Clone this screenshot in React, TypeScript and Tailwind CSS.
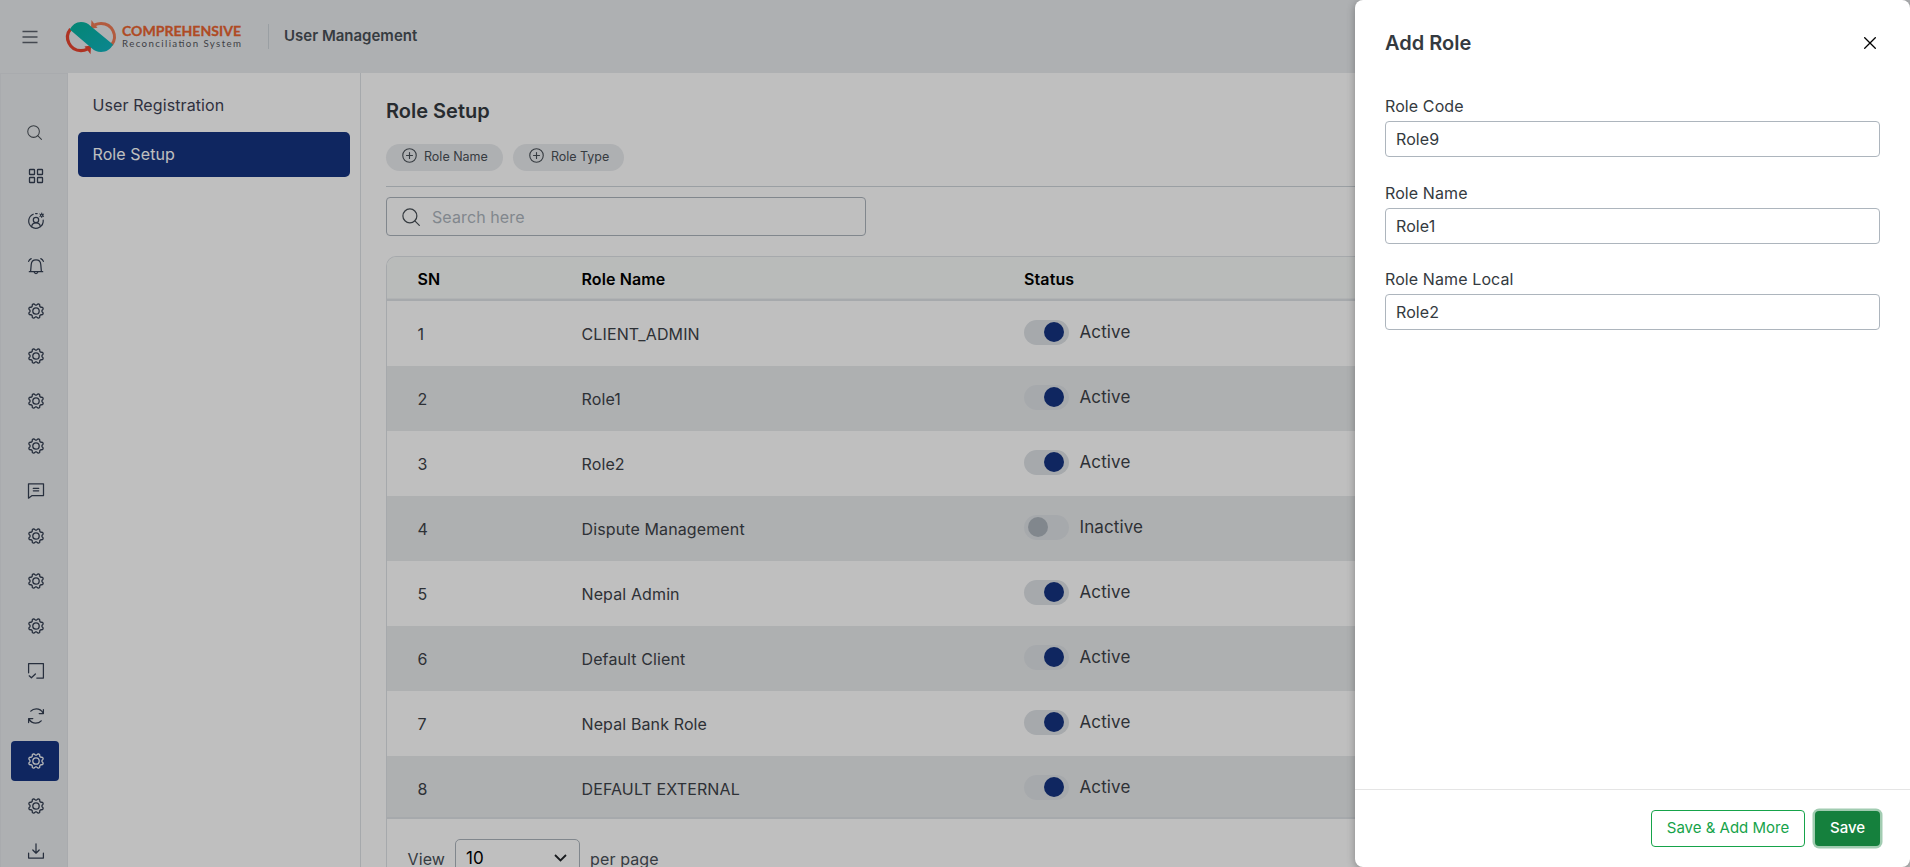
import type { ReactNode } from "react";

const GEAR = (() => {
  const pts: string[] = [];
  for (let i = 0; i < 96; i++) {
    const a = (i / 96) * Math.PI * 2;
    const w = Math.cos(8 * (a - Math.PI / 8));
    const r = 6.75 + 0.85 * Math.tanh(1.8 * w);
    pts.push(`${(8 + r * Math.cos(a)).toFixed(2)} ${(8 + r * Math.sin(a)).toFixed(2)}`);
  }
  return `M${pts.join("L")}Z`;
})();

function Icon({ children, size = 16, w = 1.25 }: { children: ReactNode; size?: number; w?: number }) {
  return (
    <svg width={size} height={size} viewBox="0 0 16 16" fill="none" stroke="currentColor" strokeWidth={w} strokeLinecap="round" strokeLinejoin="round" className="shrink-0 overflow-visible">
      {children}
    </svg>
  );
}

const Gear = () => (
  <Icon w={1.3}>
    <path d={GEAR} />
    <circle cx="8" cy="8" r="3.2" />
  </Icon>
);

const Search = ({ size = 16 }: { size?: number }) => (
  <Icon size={size} w={1.1}>
    <circle cx="7" cy="7" r="6.2" />
    <path d="M11.4 11.4 15.4 15.4" />
  </Icon>
);

const Grid = () => (
  <Icon w={1.3}>
    <rect x="1.5" y="1.5" width="5" height="5" rx=".6" />
    <rect x="9.5" y="1.5" width="5" height="5" rx=".6" />
    <rect x="1.5" y="9.5" width="5" height="5" rx=".6" />
    <rect x="9.5" y="9.5" width="5" height="5" rx=".6" />
  </Icon>
);

const UserCog = () => (
  <Icon w={1.2}>
    <path d="M5.200 1.200A7.400 7.400 0 0 0 3.400 13.700a7.400 7.400 0 0 0 11.800-6.700M7.600.6h1.600" />
    <circle cx="8" cy="7" r="2.700" />
    <path d="M3.600 13.600c.4-2.200 1.900-3.700 4.400-3.700s4 1.500 4.400 3.700" />
    <circle cx="13.700" cy="2.300" r="1.200" />
    <path strokeWidth=".9" d="M13.700.9V0M13.700 3.700v.9M12.500 1.600l-.8-.5M14.900 3l.8.5M12.500 3l-.8.5M14.900 1.600l.8-.5" />
  </Icon>
);

const Bell = () => (
  <Icon>
    <path d="M1.300 13.700h13.400M2.600 13.600 3.200 6.700C3.400 3.800 5.300 2 8 2s4.600 1.800 4.800 4.700l.6 6.900" />
    <path d="M6.200 14c.2 1 .9 1.500 1.800 1.500s1.600-.5 1.800-1.500M.6 3.400C1 2.200 1.900 1.100 3.200.6M15.400 3.400C15 2.200 14.100 1.100 12.800.6" />
  </Icon>
);

const Message = () => (
  <Icon>
    <path d="M.5 15.200V.8h15v11.700H4.100L.5 15.200ZM5.300 5.400h5.400M5.300 7.800h5.400" />
  </Icon>
);

const CheckNote = () => (
  <Icon>
    <path d="M.6 9.800V.6h14.800v14.400H8.800M1.200 12.800l2.200 2 4-3.800" />
  </Icon>
);

const Refresh = () => (
  <Icon>
    <path d="M2.800 3.200C4.200 1.600 6 .9 8.300.9c2.900 0 5.300 1.500 6.700 4M15.400 1.500v4H11.200M13.200 12.800c-1.400 1.600-3.200 2.300-5.500 2.300-2.900 0-5.300-1.500-6.700-4M.6 14.500v-4h4.200" />
  </Icon>
);

const Download = () => (
  <Icon>
    <path d="M.6 10v5h14.800v-5M8 .8v9.200M4.800 7 8 10.200 11.200 7" />
  </Icon>
);

const RAIL: ReactNode[] = [
  <Grid />, <UserCog />, <Bell />, <Gear />, <Gear />, <Gear />, <Gear />, <Message />,
  <Gear />, <Gear />, <Gear />, <CheckNote />, <Refresh />, <Gear />, <Gear />, <Download />,
];
const ACTIVE_RAIL = 13;

const ROLES = [
  { name: "CLIENT_ADMIN", active: true },
  { name: "Role1", active: true },
  { name: "Role2", active: true },
  { name: "Dispute Management", active: false },
  { name: "Nepal Admin", active: true },
  { name: "Default Client", active: true },
  { name: "Nepal Bank Role", active: true },
  { name: "DEFAULT EXTERNAL", active: true },
];

function Logo() {
  return (
    <div className="flex items-center">
      <svg width="50" height="34" viewBox="0 0 50 34" fill="none" className="overflow-visible">
        <defs>
          <linearGradient id="band" x1="0" y1="0" x2="1" y2="1">
            <stop offset="0" stopColor="#06b39b" />
            <stop offset="1" stopColor="#10b3c0" />
          </linearGradient>
        </defs>
        <path d="M4.500 9A13.300 13.300 0 0 0 15 30.600c2.600 0 4.600-.6 6.300-1.500" stroke="#e8452f" strokeWidth="3.200" />
        <path d="M18.500 26.500l6.600-1-.6 8.800-1.800-2.600z" fill="#e8452f" />
        <path d="M45.500 25A13.300 13.300 0 0 0 35 3.400c-2.600 0-4.600.6-6.300 1.500" stroke="#ee7a55" strokeWidth="3" />
        <path d="M31.500 7.700l-6.600 1 .6-8.700 1.800 2.500z" fill="#ee7a55" />
        <path d="M3.800 9.500C6.200 5 10 2 15 2c4 0 7 1.500 9.500 4L47 24.500C44.500 29.300 40.500 32 35 32c-4 0-6.500-1.300-9-3.400z" fill="url(#band)" />
      </svg>
      <svg width="121" height="34" viewBox="0 0 121 34" className="ml-[6px] overflow-visible">
        <text x="0" y="15.500" textLength="119" lengthAdjust="spacingAndGlyphs" fontFamily="Lato, sans-serif" fontWeight="700" fontSize="14" fill="#ea6430" stroke="#ea6430" strokeWidth=".3">COMPREHENSIVE</text>
        <text x="0" y="27.300" textLength="119" lengthAdjust="spacing" fontFamily="Lato, sans-serif" fontSize="9.700" fill="#54565c">Reconciliation System</text>
      </svg>
    </div>
  );
}

function Header() {
  return (
    <header className="flex h-[73px] shrink-0 items-center bg-[#e9ebee] pl-[22px]">
      <svg width="16" height="14" viewBox="0 0 16 14" stroke="#5b616b" strokeWidth="1.300">
        <path d="M.5 1.500h15M.5 7h15M.5 12.500h15" />
      </svg>
      <div className="ml-[28px]">
        <Logo />
      </div>
      <div className="ml-[25px] h-[25px] w-px bg-[#ced4da]" />
      <h1 className="ml-[15px] text-[15px] font-semibold text-[#495057]">User Management</h1>
    </header>
  );
}

function Rail() {
  return (
    <nav className="flex w-[68px] shrink-0 flex-col border-x border-t border-[#e2e5e9] bg-[#e9ebee] pt-[51px] text-[#343f52]">
      <div className="mb-[16px] ml-[26px] text-[#495057]">
        <Search size={15} />
      </div>
      {RAIL.map((icon, i) => (
        <div
          key={i}
          className={
            i === ACTIVE_RAIL
              ? "mb-[5px] ml-[10px] flex h-10 w-12 shrink-0 items-center justify-center rounded-[4px] bg-[#143380] pl-[2px] text-[#f1f3f5]"
              : "mb-[5px] ml-[10px] flex h-10 w-12 shrink-0 items-center justify-center pl-[2px]"
          }
        >
          {icon}
        </div>
      ))}
    </nav>
  );
}

function SubMenu() {
  return (
    <aside className="flex w-[293px] shrink-0 flex-col border-r border-[#dee2e6] px-[10px] pt-[10px] text-[16px] tracking-[0.1px]">
      <div className="flex h-[45px] items-center pb-[2px] pl-[14.500px] text-[#3f4254]">User Registration</div>
      <div className="mt-[4px] flex h-[45px] items-center rounded-[5px] bg-[#143380] pb-[1px] pl-[14.500px] text-white">Role Setup</div>
    </aside>
  );
}

function Pill({ label }: { label: string }) {
  return (
    <div className="flex h-[27px] items-center rounded-full bg-[#e9ebee] pr-[15px] pl-4 text-[12.500px] text-[#495057]">
      <span className="-mt-[4px] mr-[7px]">
        <Icon size={15} w={1.2}>
          <circle cx="8" cy="8" r="7.200" />
          <path d="M8 4.800v6.400M4.800 8h6.400" />
        </Icon>
      </span>
      <span className="-mt-px">{label}</span>
    </div>
  );
}

function Toggle({ on }: { on: boolean }) {
  return (
    <span className={on ? "flex h-[25px] w-[45px] items-center justify-end rounded-full bg-[#dee2e6] px-[5px]" : "flex h-[25px] w-[45px] items-center rounded-full bg-[#dee2e6] px-1"}>
      <span className={on ? "size-5 rounded-full bg-[#143380]" : "size-5 rounded-full bg-[#adb5bd]"} />
    </span>
  );
}

function RoleTable() {
  return (
    <section className="mt-[20px] flex flex-1 flex-col overflow-hidden rounded-t-[10px] border border-b-0 border-[#dee2e6] tracking-[0.12px]">
      <div className="flex h-[44px] shrink-0 items-center border-b-2 border-[#dee2e6] bg-[#f7faf8] pt-[2px] pl-[30.500px] text-[16px] font-semibold text-black shadow-[inset_0_-1px_0_#eceff0]">
        <span className="w-[164px]">SN</span>
        <span className="w-[442.500px]">Role Name</span>
        <span>Status</span>
      </div>
      <div className="h-[518px] shrink-0 overflow-hidden border-b-2 border-[#dee2e6] text-[16px] text-[#3d4248]">
        {ROLES.map((r, i) => (
          <div key={r.name} className={i % 2 ? "flex h-[65px] items-center bg-[#e9ebed] pl-[30.500px]" : "flex h-[65px] items-center pl-[30.500px]"}>
            <span className="w-[164px] pt-[1px]">{i + 1}</span>
            <span className="w-[442.500px] pt-[1px]">{r.name}</span>
            <span className="-mt-[3px] flex items-center">
              <Toggle on={r.active} />
              <span className="ml-[10.500px] pt-[2px] text-[17px]">{r.active ? "Active" : "Inactive"}</span>
            </span>
          </div>
        ))}
      </div>
      <div className="flex shrink-0 items-center pt-5 pl-[20.500px] text-[16px] text-[#495057]">
        <span className="pt-px">View</span>
        <span className="mx-[10px] flex h-[39px] w-[125px] items-center justify-between rounded-[5px] border border-[#adb5bd] pt-px pr-3 pl-[10px] text-[17px] text-black">
          10
          <svg width="13" height="8" viewBox="0 0 13 8" fill="none" stroke="#212529" strokeWidth="1.800" className="-mt-[2px]">
            <path d="M1 1l5.500 5.500L12 1" />
          </svg>
        </span>
        <span className="pt-px">per page</span>
      </div>
    </section>
  );
}

function Field({ label, value }: { label: string; value: string }) {
  return (
    <label className="flex h-[86.500px] flex-col text-[16px] tracking-[0.1px] text-[#343a40]">
      <span className="mb-[3px] leading-6">{label}</span>
      <input readOnly value={value} className="h-[36px] w-full shrink-0 rounded-[4px] border border-[#adb5bd] bg-white px-[10px] text-[16px] text-[#343a40] outline-none" />
    </label>
  );
}

function Drawer() {
  return (
    <div className="absolute inset-y-0 right-0 flex w-[555px] flex-col rounded-[8px] bg-white shadow-[0_2px_8px_rgba(0,0,0,0.3)]">
      <div className="flex h-[86px] shrink-0 items-center justify-between px-[30px]">
        <h2 className="text-[20px] font-semibold text-[#343a40]">Add Role</h2>
        <svg width="12" height="12" viewBox="0 0 12 12" stroke="#000" strokeWidth="1.300" className="mr-1">
          <path d="M.3.300l11.400 11.400M11.700.300.300 11.700" />
        </svg>
      </div>
      <div className="flex flex-1 flex-col px-[30px] pt-[8px]">
        <Field label="Role Code" value="Role9" />
        <Field label="Role Name" value="Role1" />
        <Field label="Role Name Local" value="Role2" />
      </div>
      <footer className="flex h-[78px] shrink-0 items-start justify-end gap-[10px] border-t border-[#e5e5e5] px-[30px] pt-[20px]">
        <button className="h-[37px] w-[154px] rounded-[4px] border border-[#16a34a] text-[15px] text-[#16a34a]">Save &amp; Add More</button>
        <button className="mt-px h-[35px] w-[65px] rounded-[4px] bg-[#15803d] text-[15px] font-medium text-white shadow-[0_0_0_2.500px_rgba(21,128,61,0.4)]">Save</button>
      </footer>
    </div>
  );
}

export default function App() {
  return (
    <div className="relative flex h-[867px] w-full flex-col overflow-hidden bg-white font-['Inter',sans-serif]">
      <Header />
      <div className="flex min-h-0 flex-1">
        <Rail />
        <SubMenu />
        <main className="flex min-w-0 flex-1 flex-col pt-[23px] pr-6 pl-[25px]">
          <h2 className="text-[20px] leading-[30px] font-semibold text-[#343a40]">Role Setup</h2>
          <div className="mt-[18px] flex gap-[10px]">
            <Pill label="Role Name" />
            <Pill label="Role Type" />
          </div>
          <div className="mt-[15px] border-t border-[#ced4da]" />
          <div className="mt-[10px] flex h-[39px] w-[480px] shrink-0 items-center rounded-[4px] border border-[#adb5bd] pl-[15px] text-[16px] tracking-[0.1px] text-[#adb5bd]">
            <span className="mr-[12px] text-[#495057]">
              <Search size={18} />
            </span>
            Search here
          </div>
          <RoleTable />
        </main>
      </div>
      <div className="absolute inset-0 bg-black/25" />
      <Drawer />
    </div>
  );
}
